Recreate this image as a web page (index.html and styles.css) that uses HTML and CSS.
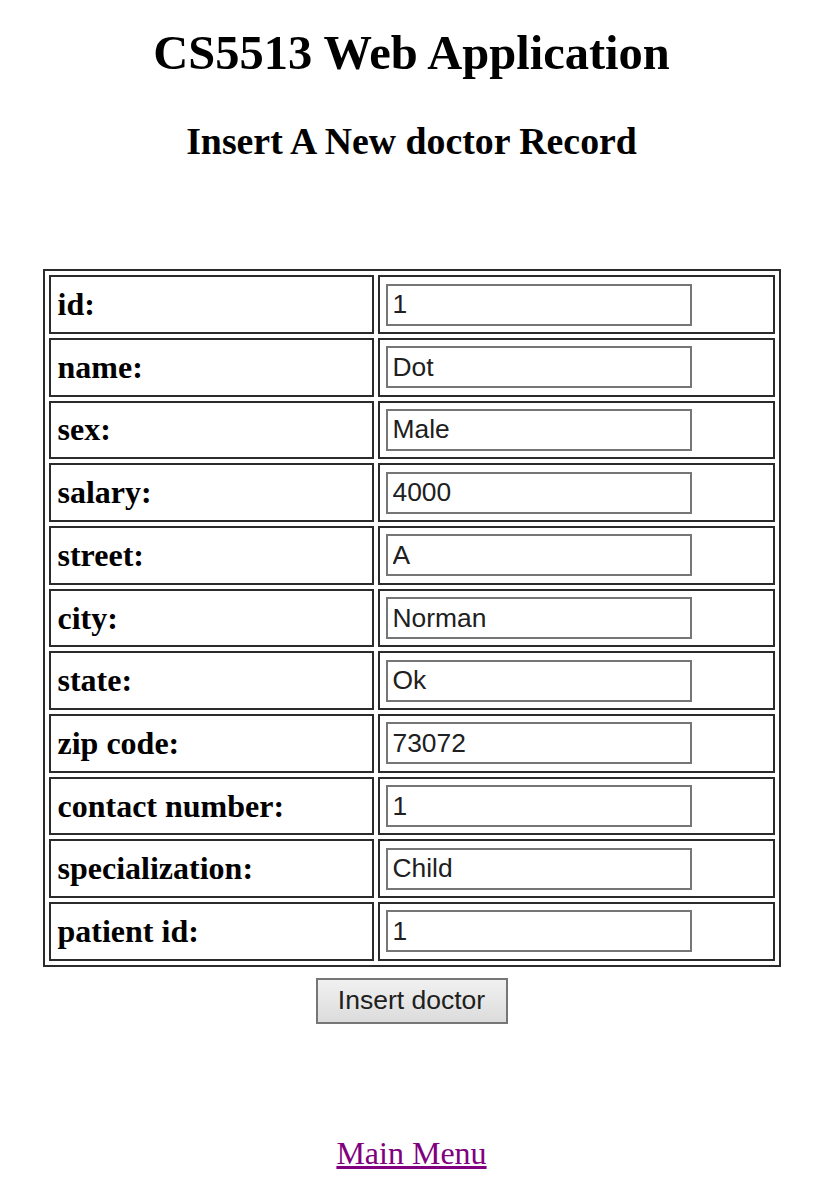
FILE: index.html
```html
<!DOCTYPE html>
<html>
<head>
<meta charset="utf-8">
<title>CS5513 Web Application</title>
<link rel="stylesheet" href="styles.css">
</head>
<body>
<h1 class="title">CS5513 Web Application</h1>
<h2 class="subtitle">Insert A New doctor Record</h2>
<form class="record-form">
<table class="record-table">
<tr><td class="label">id:</td><td class="field"><input class="text-input" type="text" value="1"></td></tr>
<tr><td class="label">name:</td><td class="field"><input class="text-input" type="text" value="Dot"></td></tr>
<tr><td class="label">sex:</td><td class="field"><input class="text-input" type="text" value="Male"></td></tr>
<tr><td class="label">salary:</td><td class="field"><input class="text-input" type="text" value="4000"></td></tr>
<tr><td class="label">street:</td><td class="field"><input class="text-input" type="text" value="A"></td></tr>
<tr><td class="label">city:</td><td class="field"><input class="text-input" type="text" value="Norman"></td></tr>
<tr><td class="label">state:</td><td class="field"><input class="text-input" type="text" value="Ok"></td></tr>
<tr><td class="label">zip code:</td><td class="field"><input class="text-input" type="text" value="73072"></td></tr>
<tr><td class="label">contact number:</td><td class="field"><input class="text-input" type="text" value="1"></td></tr>
<tr><td class="label">specialization:</td><td class="field"><input class="text-input" type="text" value="Child"></td></tr>
<tr><td class="label">patient id:</td><td class="field"><input class="text-input" type="text" value="1"></td></tr>
</table>
<div class="actions"><button class="submit-btn" type="button">Insert doctor</button></div>
</form>
<p class="menu"><a class="menu-link" href="#">Main Menu</a></p>
</body>
</html>
```

FILE: styles.css
```css
html, body {
  background: #ffffff;
}
body {
  margin: 0;
  padding: 0 0 0 10px;
  font-family: "Liberation Serif", "Times New Roman", serif;
  color: #000;
  text-align: center;
}
.title {
  font-size: 48.5px;
  line-height: 1.15;
  font-weight: bold;
  margin: 25px 0 39px;
}
.subtitle {
  font-size: 37.8px;
  line-height: 1.15;
  font-weight: bold;
  margin: 0 0 106px;
}
.record-form {
  margin: 0;
}
.record-table {
  width: 738px;
  margin: 0 auto;
  border: 2px solid #2b2b2b;
  border-spacing: 4px;
  table-layout: fixed;
  text-align: left;
}
.record-table td {
  box-sizing: border-box;
  border: 2px solid #2b2b2b;
  padding: 0 6px;
  height: 58.7px;
  vertical-align: middle;
}
.record-table td.label {
  width: 325px;
  font-size: 32px;
  font-weight: bold;
  padding-left: 7px;
}
.text-input {
  box-sizing: border-box;
  width: 306px;
  height: 42px;
  border: 2px solid #767676;
  padding: 0 4px 0 5px;
  font-family: "Liberation Sans", Arial, sans-serif;
  font-size: 26.4px;
  color: #202020;
  background: #fff;
  display: block;
}
.actions {
  display: flex;
  justify-content: center;
  margin-top: 11px;
}
.submit-btn {
  box-sizing: border-box;
  width: 192px;
  height: 46px;
  border: 2px solid #767676;
  background: linear-gradient(#f1f1f1, #dcdcdc);
  font-family: "Liberation Sans", Arial, sans-serif;
  font-size: 26.5px;
  color: #202020;
  padding: 0;
}
.menu {
  margin: 111px 0 0;
  font-size: 32px;
  line-height: 1.15;
}
.menu-link {
  color: #800080;
  text-decoration: underline;
}
```
